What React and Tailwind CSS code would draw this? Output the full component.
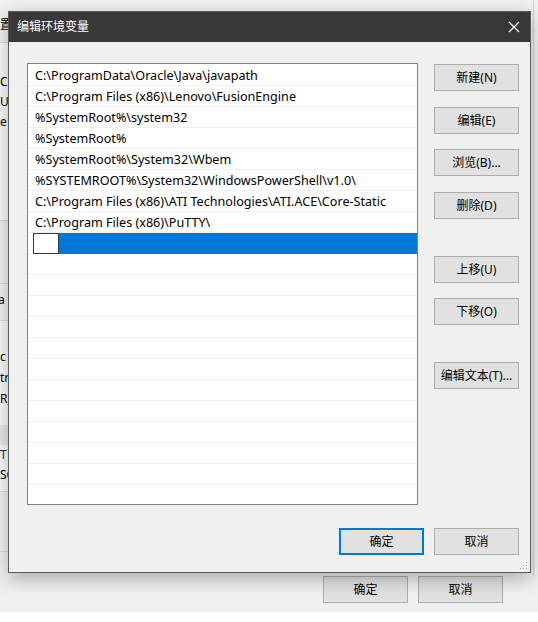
import React from 'react';

const FONT = "font-['Noto_Sans','Noto_Sans_CJK_SC',sans-serif]";

const PATHS = [
  'C:\\ProgramData\\Oracle\\Java\\javapath',
  'C:\\Program Files (x86)\\Lenovo\\FusionEngine',
  '%SystemRoot%\\system32',
  '%SystemRoot%',
  '%SystemRoot%\\System32\\Wbem',
  '%SYSTEMROOT%\\System32\\WindowsPowerShell\\v1.0\\',
  'C:\\Program Files (x86)\\ATI Technologies\\ATI.ACE\\Core-Static',
  'C:\\Program Files (x86)\\PuTTY\\',
];

const WinButton = ({ label, primary = false, className = '' }) => (
  <button
    className={`flex h-[27px] w-[85px] items-center justify-center bg-[#e1e1e1] text-[12px] text-black ${
      primary ? 'border-2 border-[#0078d7]' : 'border border-[#adadad]'
    } ${className}`}
  >
    {label}
  </button>
);

const BackgroundWindow = () => (
  <div className="absolute inset-x-0 top-0 flex h-[612px] flex-col bg-[#f0f0f0]">
    <div className="flex flex-1">
      {/* left strip of the window behind */}
      <div className="flex w-[8px] flex-col overflow-hidden text-[12px] leading-none text-black">
        <div className="h-[19px]" />
        <div className="flex h-[15px] justify-end whitespace-nowrap">
          <span className="-mr-[4px]">置</span>
        </div>
        <div className="h-[8px]" />
        <div className="h-[178px] border-t border-[#d9d9d9] bg-[#fafafa]">
          <div className="mt-[33px] whitespace-nowrap">Cp</div>
          <div className="mt-[8px] whitespace-nowrap">U</div>
          <div className="mt-[8px] whitespace-nowrap">e</div>
        </div>
        <div className="h-[63px] border-t border-[#d9d9d9]" />
        <div className="h-[37px] border-t border-[#d9d9d9]">
          <div className="mt-[10px] -ml-[2px] whitespace-nowrap">a</div>
        </div>
        <div className="h-[105px] border-t border-[#d9d9d9] bg-[#fafafa]">
          <div className="mt-[30px] whitespace-nowrap">c</div>
          <div className="mt-[9px] whitespace-nowrap">tr</div>
          <div className="mt-[9px] whitespace-nowrap">R_</div>
        </div>
        <div className="h-[20px] bg-[#e8e8e8]" />
        <div className="h-[47px] border-b border-[#d9d9d9] bg-[#fafafa]">
          <div className="mt-[4px] whitespace-nowrap text-[#1f2a5a]">T</div>
          <div className="mt-[8px] whitespace-nowrap">SC</div>
        </div>
        <div className="h-[60px] border-b border-[#d9d9d9]" />
      </div>
      <div className="flex-1" />
      <div className="mr-[4px] w-px bg-[#d0d0d0]" />
    </div>
    <div className="flex justify-end gap-[10px] pb-[9px] pr-[35px]">
      <WinButton label="确定" />
      <WinButton label="取消" />
    </div>
  </div>
);

const PathList = () => {
  const emptyRows = Array.from({ length: 12 });
  return (
    <div className="h-[442px] w-[391px] overflow-hidden border border-[#828282] bg-white pt-px text-[12.6px] text-black">
      {PATHS.map((p) => (
        <div
          key={p}
          className="flex h-[21px] items-center border-b border-[#f0f0f0] pl-[7px] pt-[2px] whitespace-nowrap"
        >
          {p}
        </div>
      ))}
      {/* row being edited */}
      <div className="flex h-[21px] border-b border-[#f0f0f0]">
        <div className="ml-[5px] h-[21px] w-[26px] border border-[#3a3a3a] bg-white" />
        <div className="h-[21px] flex-1 bg-[#0078d7]" />
      </div>
      {emptyRows.map((_, i) => (
        <div key={i} className="h-[21px] border-b border-[#f0f0f0]" />
      ))}
    </div>
  );
};

const EditDialog = () => (
  <div className="absolute left-[8px] top-[11px] flex h-[562px] w-[523px] flex-col border border-[#5a5a5a] bg-[#f0f0f0] shadow-[0_6px_18px_rgba(0,0,0,0.28)]">
    {/* title bar */}
    <div className="flex h-[30px] items-center justify-between bg-[#383838] pl-[8px] pr-[8px] text-white">
      <span className="text-[12px]">编辑环境变量</span>
      <svg width="12" height="12" viewBox="0 0 12 12" className="mr-[2px]">
        <path d="M1 1 L11 11 M11 1 L1 11" stroke="#ffffff" strokeWidth="1.2" fill="none" />
      </svg>
    </div>

    <div className="flex flex-col pl-[18px] pr-[11px] pt-[21px]">
      <div className="flex gap-[16px]">
        <PathList />
        <div className="flex flex-col">
          <WinButton label="新建(N)" className="mt-px" />
          <WinButton label="编辑(E)" className="mt-[16px]" />
          <WinButton label="浏览(B)..." className="mt-[15px]" />
          <WinButton label="删除(D)" className="mt-[16px]" />
          <WinButton label="上移(U)" className="mt-[37px]" />
          <WinButton label="下移(O)" className="mt-[15px]" />
          <WinButton label="编辑文本(T)..." className="mt-[37px]" />
        </div>
      </div>

      <div className="mt-[23px] flex justify-end gap-[10px]">
        <WinButton label="确定" primary />
        <WinButton label="取消" />
      </div>
    </div>

    {/* resize grip */}
    <svg width="8" height="8" viewBox="0 0 8 8" className="absolute bottom-[2px] right-[2px]">
      <rect x="6" y="0" width="1" height="1" fill="#b0b0b0" />
      <rect x="3" y="3" width="1" height="1" fill="#b0b0b0" />
      <rect x="6" y="3" width="1" height="1" fill="#b0b0b0" />
      <rect x="0" y="6" width="1" height="1" fill="#b0b0b0" />
      <rect x="3" y="6" width="1" height="1" fill="#b0b0b0" />
      <rect x="6" y="6" width="1" height="1" fill="#b0b0b0" />
    </svg>
  </div>
);

export default function App() {
  return (
    <div className={`relative h-[622px] w-[538px] overflow-hidden bg-white ${FONT}`}>
      <BackgroundWindow />
      <EditDialog />
    </div>
  );
}
